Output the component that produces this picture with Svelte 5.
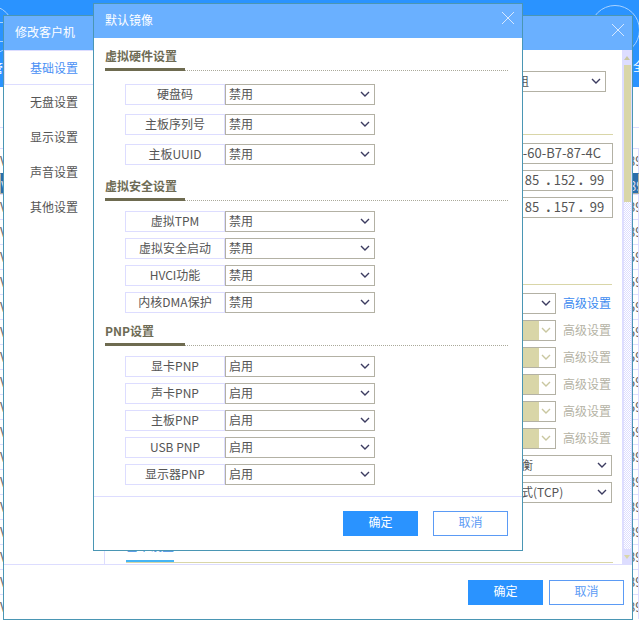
<script>
  const columns = 7;
  const rowDigits = ['89','89','89','89','59','59','59','59','59','59','59','59','89','89','89','89','89','89','89'];
  const nav = ['基础设置', '无盘设置', '显示设置', '声音设置', '其他设置'];
  const groups = [
    { title: '虚拟硬件设置', cls: 'g1', value: '禁用', rows: ['硬盘码', '主板序列号', '主板UUID'] },
    { title: '虚拟安全设置', cls: 'g2', value: '禁用', rows: ['虚拟TPM', '虚拟安全启动', 'HVCI功能', '内核DMA保护'] },
    { title: 'PNP设置', cls: 'g3', value: '启用', rows: ['显卡PNP', '声卡PNP', '主板PNP', 'USB PNP', '显示器PNP'] }
  ];
  const ips = [['192', '85', '152', '99'], ['192', '85', '157', '99']];
</script>

<div class="page">
  <header class="top">
    <div class="ring ring-left"></div>
    <div class="square"></div>
    <span class="top-left">管</span>
    <div class="ring ring-right"></div>
    <span class="top-right">全</span>
  </header>
  <div class="table-head"></div>
  <div class="table-sub"></div>
  {#each rowDigits as d, i}
    <div class="row" class:sel={i === 1}>
      {#each Array(columns) as _, c}
        <div class="cell">
          {#if c === 0}<span class="v">V</span>{/if}
          {#if c === columns - 1}<span class="num">{d}</span>{/if}
        </div>
      {/each}
    </div>
  {/each}

  <section class="dialog outer">
    <div class="title outer-title">
      <span>修改客户机</span>
      <svg class="close" viewBox="0 0 12 12"><path d="M0 0L12 12M12 0L0 12" /></svg>
    </div>
    <div class="outer-body">
      <nav class="side">
        {#each nav as item, i}
          <div class="nav-item" class:active={i === 0}>{item}</div>
        {/each}
      </nav>
      <div class="form">
        <div class="f-row r-first">
          <div class="sel w-group"><span>默认分组</span><svg class="chev" viewBox="0 0 10 6"><path d="M1 1L5 5L9 1" /></svg></div>
        </div>
        <div class="rule rule-1"></div>
        <div class="f-row r-input"><div class="input mac">52-54-60-B7-87-4C</div></div>
        {#each ips as ip}
          <div class="f-row r-next">
            <div class="input ip">
              {#each ip as seg, i}
                {#if i > 0}<i class="dot">.</i>{/if}<b class="seg">{seg}</b>
              {/each}
            </div>
          </div>
        {/each}
        <div class="rule rule-2"></div>
        <div class="f-row r-input r-link">
          <div class="sel w-disk"><span>系统盘</span><svg class="chev" viewBox="0 0 10 6"><path d="M1 1L5 5L9 1" /></svg></div>
          <a class="link">高级设置</a>
        </div>
        {#each [1, 2, 3, 4, 5] as n}
          <div class="f-row r-next r-link">
            <div class="sel w-disk off"><i class="off-fill"></i><svg class="chev" viewBox="0 0 10 6"><path d="M1 1L5 5L9 1" /></svg></div>
            <a class="link muted">高级设置</a>
          </div>
        {/each}
        <div class="f-row r-next r-wide">
          <div class="sel w-wide"><span>负载均衡</span><svg class="chev" viewBox="0 0 10 6"><path d="M1 1L5 5L9 1" /></svg></div>
        </div>
        <div class="f-row r-next r-wide">
          <div class="sel w-wide"><span>传输模式(TCP)</span><svg class="chev" viewBox="0 0 10 6"><path d="M1 1L5 5L9 1" /></svg></div>
        </div>
        <div class="tabline"><div class="tab">基本设置</div></div>
      </div>
      <div class="scroll">
        <div class="sb-btn"><i class="up"></i></div>
        <div class="sb-track"><div class="sb-thumb"></div></div>
        <div class="sb-btn"><i class="down"></i></div>
      </div>
    </div>
    <footer class="foot outer-foot">
      <button class="btn primary">确定</button>
      <button class="btn ghost">取消</button>
    </footer>
  </section>

  <section class="dialog inner">
    <div class="title inner-title">
      <span>默认镜像</span>
      <svg class="close" viewBox="0 0 12 12"><path d="M0 0L12 12M12 0L0 12" /></svg>
    </div>
    <div class="inner-body">
      {#each groups as g}
        <div class="group {g.cls}">
          <h3>{g.title}</h3>
          <div class="bar"><i class="bar-fill"></i><i class="bar-dots"></i></div>
          <div class="fields">
            {#each g.rows as label}
              <div class="field">
                <label>{label}</label>
                <div class="sel w-field"><span>{g.value}</span><svg class="chev" viewBox="0 0 10 6"><path d="M1 1L5 5L9 1" /></svg></div>
              </div>
            {/each}
          </div>
        </div>
      {/each}
    </div>
    <footer class="foot inner-foot">
      <button class="btn primary">确定</button>
      <button class="btn ghost">取消</button>
    </footer>
  </section>
</div>

<style>
  :global(body) { margin: 0; }
  .page {
    position: relative;
    width: 639px;
    height: 626px;
    overflow: hidden;
    background: #fff;
    font: 12px/1.2 "Noto Sans CJK SC", "Noto Sans", sans-serif;
    color: #555;
  }
  .top { position: relative; height: 87px; background: #2a93ff; overflow: hidden; color: #fff; }
  .ring { position: absolute; width: 50px; height: 50px; box-sizing: border-box; border: 1.5px solid #a8d2ff; border-radius: 50%; top: 5px; }
  .ring-left { left: -36px; }
  .ring-right { left: 590px; }
  .square { position: absolute; left: -8px; top: 22px; width: 10px; height: 18px; border: 1px solid #a8d2ff; }
  .top-left { position: absolute; left: -9px; top: 61px; }
  .top-right { position: absolute; left: 633px; top: 59px; }

  .table-head { height: 41px; border-bottom: 1px solid #ddf; box-sizing: border-box; }
  .table-sub { height: 20px; }
  .row {
    display: grid;
    grid-template-columns: 70px 100px 100px 100px 120px 70px 79px;
    height: 25px;
    box-sizing: border-box;
    border-top: 1px solid #ddf;
    color: #666;
    font-size: 13px;
  }
  .row.sel { background: #2a6dab; color: #dde; border-top-color: #2a6dab; }
  .cell { border-right: 1px solid #ddf; box-sizing: border-box; overflow: hidden; line-height: 24px; height: 24px; }
  .v { margin-left: 0; }
  .num { display: block; margin-left: 68px; }

  .dialog { position: absolute; box-sizing: border-box; border: 1px solid #4a96b4; background: #fff; display: flex; flex-direction: column; }
  .outer { left: 3px; top: 15px; width: 630px; height: 605px; }
  .inner { left: 93px; top: 3px; width: 430px; height: 548px; }
  .title { display: flex; align-items: center; background: #6ab0ff; color: #fff; flex: none; }
  .title span { flex: 1; padding-bottom: 2px; }
  .outer-title { height: 34px; padding: 0 8px 0 11px; }
  .inner-title { height: 34px; padding: 0 8px 0 11px; }
  .close { width: 12px; height: 12px; fill: none; stroke: #d6e8ff; stroke-width: 1; align-self: flex-start; margin-top: 8px; }

  .outer-body { display: flex; height: 514px; border-bottom: 1px solid #ddf; flex: none; }
  .side { width: 101px; box-sizing: border-box; border-right: 1px solid #ddf; flex: none; }
  .nav-item { height: 35px; line-height: 33px; padding-left: 26px; box-sizing: border-box; }
  .nav-item.active { border: 1px solid #ddf; border-right: 0; padding-left: 25px; color: #4a90f5; }
  .form { flex: 1; min-width: 0; padding: 21px 9px 0 21px; overflow: hidden; }
  .f-row { display: flex; justify-content: flex-end; align-items: center; }
  .r-input { margin-top: 8px; }
  .r-next { margin-top: 6px; }
  .r-first { margin-right: 7px; }
  .r-link, .r-wide { margin-right: 1px; }
  .rule { height: 1px; background: #d9d6a8; }
  .rule-1 { margin-top: 42px; }
  .rule-2 { margin-top: 66px; margin-right: 1px; }

  .sel {
    position: relative;
    height: 21px;
    box-sizing: border-box;
    border: 1px solid #b3b1a4;
    background: #fff;
    line-height: 18px;
    overflow: hidden;
    white-space: nowrap;
    flex: none;
  }
  .chev { position: absolute; right: 4px; top: 6px; width: 10px; height: 6px; fill: none; stroke: #3c3c60; stroke-width: 1.4; }
  .w-group { width: 126px; padding-left: 0; }
  .w-disk { width: 110px; }
  .w-wide { width: 130px; padding-left: 2px; }
  .w-field { width: 150px; padding-left: 3px; }
  .off .off-fill { position: absolute; left: 0; top: 0; bottom: 0; right: 16px; background: #d9d6a8; }
  .off .chev { stroke: #c9c7a0; }
  .input { height: 21px; box-sizing: border-box; border: 1px solid #b3b1a4; line-height: 18px; width: 150px; background: #fff; font-size: 13px; color: #555; white-space: nowrap; }
  .mac { text-align: right; padding-right: 11px; }
  .ip { display: flex; justify-content: flex-end; padding-right: 1px; }
  .seg { width: 28px; text-align: center; font-weight: 400; flex: none; }
  .dot { width: 4.5px; text-align: center; font-style: normal; flex: none; font-weight: 700; }
  .link { width: 48px; margin: 0 1px 0 7px; color: #3d8bf0; white-space: nowrap; flex: none; }
  .link.muted { color: #b5b3a5; }
  .tabline { margin-top: 33px; border-bottom: 1px solid #d9d6a8; }
  .tab { width: 48px; line-height: 20px; padding-bottom: 4px; border-bottom: 2px solid #45b5f5; color: #3a8ae0; white-space: nowrap; }

  .scroll { width: 10px; flex: none; background: #ddf; display: flex; flex-direction: column; }
  .sb-btn { height: 15px; display: flex; align-items: center; justify-content: center; flex: none; }
  .up { border: 3px solid transparent; border-top: 0; border-bottom: 4px solid #c9c7a0; }
  .down { border: 3px solid transparent; border-bottom: 0; border-top: 4px solid #d9d6a8; }
  .sb-track {
    flex: 1;
    margin: 0 1px 0 2px;
    background: repeating-conic-gradient(#ddf 0 25%, #fff 0 50%) 0 0 / 2px 2px;
  }
  .sb-thumb { height: 137px; background: #d9d6a8; }

  .foot { display: flex; justify-content: flex-end; flex: 1; }
  .outer-foot { gap: 6px; padding: 15px 8px 0 0; }
  .inner-foot { gap: 15px; padding: 14px 14px 0 0; }
  .btn { width: 75px; height: 25px; box-sizing: border-box; font: inherit; padding: 0 0 2px; cursor: pointer; }
  .primary { background: #2a93ff; border: 0; color: #fff; }
  .ghost { background: #fff; border: 1px solid #5b9bf5; color: #5b9bf5; }

  .inner-body { height: 458px; flex: none; border-bottom: 1px solid #ddf; padding: 0 14px 0 11px; box-sizing: content-box; }
  .group h3 { margin: 0; font-size: 12px; font-weight: 700; line-height: 18px; padding-bottom: 2px; color: #6e6b55; }
  .g1 h3 { margin-top: 9px; }
  .g2 h3 { margin-top: 12px; }
  .g3 h3 { margin-top: 9px; }
  .bar { display: flex; margin-top: 1px; }
  .bar-fill { width: 80px; height: 3px; background: #6e6b50; flex: none; }
  .bar-dots { flex: 1; height: 2px; border-bottom: 1px dotted #aaa99a; }
  .fields { display: flex; flex-direction: column; padding-left: 20px; gap: 6px; margin-top: 10px; }
  .g1 .fields { gap: 9px; margin-top: 13px; }
  .field { display: flex; }
  .field label { width: 100px; height: 21px; box-sizing: border-box; border: 1px solid #ddf; text-align: center; line-height: 18px; flex: none; }
</style>
